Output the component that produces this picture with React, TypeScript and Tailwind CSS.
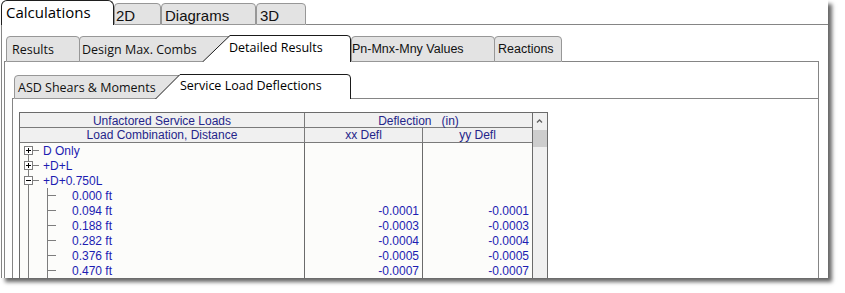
import React from "react";

type Row = {
  label: string;
  level: 0 | 1;
  kind?: "plus" | "minus";
  first?: boolean;
  xx?: string;
  yy?: string;
};

const rows: Row[] = [
  { label: "D Only", level: 0, kind: "plus", first: true },
  { label: "+D+L", level: 0, kind: "plus" },
  { label: "+D+0.750L", level: 0, kind: "minus" },
  { label: "0.000 ft", level: 1 },
  { label: "0.094 ft", level: 1, xx: "-0.0001", yy: "-0.0001" },
  { label: "0.188 ft", level: 1, xx: "-0.0003", yy: "-0.0003" },
  { label: "0.282 ft", level: 1, xx: "-0.0004", yy: "-0.0004" },
  { label: "0.376 ft", level: 1, xx: "-0.0005", yy: "-0.0005" },
  { label: "0.470 ft", level: 1, xx: "-0.0007", yy: "-0.0007" },
];

// tree connectors + expand box
function TreeGlyph({ row }: { row: Row }) {
  if (row.level === 0) {
    return (
      <svg width="23" height="15" className="shrink-0">
        <line x1="8.5" y1={row.first ? 11 : 0} x2="8.5" y2="15" stroke="#7d7d7d" />
        <line x1="12" y1="7.5" x2="19" y2="7.5" stroke="#7d7d7d" />
        <rect x="4.5" y="3.5" width="8" height="8" fill="#fff" stroke="#7d7d7d" />
        <line x1="6" y1="7.5" x2="11" y2="7.5" stroke="#000" />
        {row.kind === "plus" && <line x1="8.5" y1="5" x2="8.5" y2="10" stroke="#000" />}
      </svg>
    );
  }
  return (
    <svg width="52" height="15" className="shrink-0">
      <line x1="8.5" y1="0" x2="8.5" y2="15" stroke="#7d7d7d" />
      <line x1="27.5" y1="0" x2="27.5" y2="15" stroke="#7d7d7d" />
      <line x1="27.5" y1="7.5" x2="36" y2="7.5" stroke="#7d7d7d" />
    </svg>
  );
}

// selected tab outline with slanted left edge
function SlantTab({ w, h, dx }: { w: number; h: number; dx: number }) {
  return (
    <svg width={w} height={h} className="absolute left-0 top-0">
      <path
        d={`M0.5 ${h} L${dx} 0.5 L${w - 4} 0.5 Q${w - 0.5} 0.5 ${w - 0.5} 4 L${w - 0.5} ${h}`}
        fill="#fff"
        stroke="#1a1a1a"
      />
    </svg>
  );
}

export default function App() {
  return (
    <div className="h-[293px] w-[845px] bg-white">
      <div className="ml-px flex h-[278px] w-[827px] flex-col overflow-hidden bg-white shadow-[4px_4px_4px_rgba(0,0,0,0.6)]">
        {/* top tab strip */}
        <div className="flex h-[25px] shrink-0 items-end">
          <div className="h-[25px] w-[113px] shrink-0 rounded-t-[6px] border border-b-0 border-[#1e1e1e] bg-white pl-[4px] pt-[2px] font-['Open_Sans',sans-serif] text-[15px] leading-[19px] text-black">
            Calculations
          </div>
          <div className="h-[22px] w-[47px] shrink-0 rounded-t-[4px] border border-[#979797] bg-[#e3e3e3] pl-px pt-[3px] font-['Liberation_Sans',Arial,sans-serif] text-[15px] leading-[17px] text-[#111]">
            2D
          </div>
          <div className="h-[22px] w-[95px] shrink-0 rounded-t-[4px] border border-[#979797] bg-[#e3e3e3] pl-[3px] pt-[3px] font-['Liberation_Sans',Arial,sans-serif] text-[15px] leading-[17px] text-[#111]">
            Diagrams
          </div>
          <div className="h-[22px] w-[50px] shrink-0 rounded-t-[4px] border border-[#979797] bg-[#e3e3e3] pl-[3px] pt-[3px] font-['Liberation_Sans',Arial,sans-serif] text-[15px] leading-[17px] text-[#111]">
            3D
          </div>
          <div className="h-px flex-1 bg-[#858585]" />
        </div>

        {/* calculations panel */}
        <div className="flex flex-1 flex-col border-l border-[#858585] pl-[2px]">
          <div className="flex w-[815px] flex-1 flex-col">
            {/* second tab strip */}
            <div className="flex h-[37px] shrink-0 items-end font-['Open_Sans',sans-serif] text-[12.5px] leading-[17px] text-[#111]">
              <div className="h-px w-[2px] bg-[#858585]" />
              <div className="h-[26px] w-[74px] shrink-0 rounded-t-[4px] border border-[#979797] bg-[#e3e3e3] pl-[5px] pt-[4px]">
                Results
              </div>
              <div className="-ml-px h-[26px] w-[155px] shrink-0 rounded-t-[4px] border border-[#979797] bg-[#e3e3e3] pl-[2px] pt-[4px]">
                Design Max. Combs
              </div>
              <div className="relative z-10 -ml-[32px] h-[27px] w-[149px] shrink-0">
                <SlantTab w={149} h={27} dx={28} />
                <div className="relative pl-[27px] pt-[4px] text-black">Detailed Results</div>
              </div>
              <div className="h-[26px] w-[144px] shrink-0 rounded-t-[4px] border border-[#979797] bg-[#e3e3e3] pt-[4px] font-['Liberation_Sans',Arial,sans-serif] text-[12.5px]">
                Pn-Mnx-Mny Values
              </div>
              <div className="-ml-px h-[26px] w-[68px] shrink-0 rounded-t-[4px] border border-[#979797] bg-[#e3e3e3] pl-[3px] pt-[4px] font-['Liberation_Sans',Arial,sans-serif] text-[12.5px]">
                Reactions
              </div>
              <div className="h-px flex-1 bg-[#858585]" />
            </div>

            {/* second panel */}
            <div className="flex flex-1 flex-col border-x border-[#858585]">
              <div className="ml-[7px] flex flex-1 flex-col">
                {/* third tab strip */}
                <div className="flex h-[37px] shrink-0 items-end font-['Open_Sans',sans-serif] text-[12.5px] leading-[17px] text-[#111]">
                  <div className="h-px w-[2px] bg-[#858585]" />
                  <div className="h-[24px] w-[169px] shrink-0 rounded-t-[4px] border border-[#979797] bg-[#e3e3e3] pl-[3px] pt-[3px]">
                    ASD Shears &amp; Moments
                  </div>
                  <div className="relative z-10 -ml-[28px] h-[25px] w-[196px] shrink-0">
                    <SlantTab w={196} h={25} dx={25} />
                    <div className="relative pl-[25px] pt-[3px] text-black">Service Load Deflections</div>
                  </div>
                  <div className="h-px flex-1 bg-[#858585]" />
                </div>

                {/* third panel */}
                <div className="flex-1 border-l border-[#858585] pl-[6px] pt-[13px]">
                  <div className="flex w-[529px] border border-[#6b6b6b] font-['Liberation_Sans',Arial,sans-serif] text-[12px]">
                    <div className="w-[512px]">
                      <div className="flex h-[15px] border-b border-[#7a7a7a] bg-[#f0f0f0] leading-[16px] text-[#25258a]">
                        <div className="w-[285px] border-r border-[#7a7a7a] text-center">Unfactored Service Loads</div>
                        <div className="flex-1 whitespace-pre text-center">Deflection   (in)</div>
                      </div>
                      <div className="flex h-[15px] border-b border-[#7a7a7a] bg-[#f0f0f0] leading-[15px] text-[#25258a]">
                        <div className="w-[285px] border-r border-[#7a7a7a] text-center">Load Combination, Distance</div>
                        <div className="w-[118px] border-r border-[#7a7a7a] text-center">xx Defl</div>
                        <div className="flex-1 text-center">yy Defl</div>
                      </div>
                      <div className="flex h-[140px] bg-[#fcfcfa] leading-[17px] text-[#1d1db2]">
                        <div className="w-[285px] border-r border-[#6b6b6b]">
                          {rows.map((r) => (
                            <div key={r.label} className="flex h-[15px] items-start">
                              <TreeGlyph row={r} />
                              <span>{r.label}</span>
                            </div>
                          ))}
                        </div>
                        <div className="w-[118px] border-r border-[#6b6b6b]">
                          {rows.map((r) => (
                            <div key={r.label} className="h-[15px] pr-[3px] text-right">
                              {r.xx}
                            </div>
                          ))}
                        </div>
                        <div className="flex-1">
                          {rows.map((r) => (
                            <div key={r.label} className="h-[15px] pr-[3px] text-right">
                              {r.yy}
                            </div>
                          ))}
                        </div>
                      </div>
                    </div>
                    {/* scrollbar */}
                    <div className="w-[15px] border-l border-[#6b6b6b] bg-[#f0f0f0]">
                      <svg width="14" height="17" className="block">
                        <polyline points="4,9.5 6.5,7 9,9.5" fill="none" stroke="#606060" strokeWidth="1.3" />
                      </svg>
                      <div className="h-[17px] bg-[#cdcdcd]" />
                    </div>
                  </div>
                </div>
              </div>
            </div>
          </div>
        </div>
      </div>
    </div>
  );
}
